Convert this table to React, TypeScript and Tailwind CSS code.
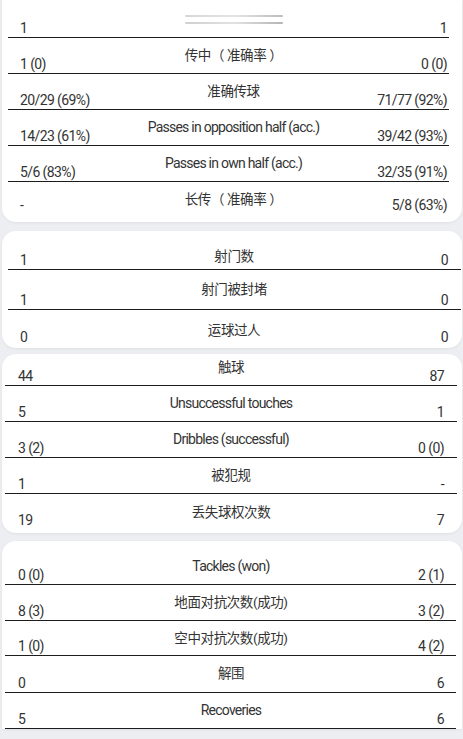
import React from "react";

type Stat = {
  left: string;
  label: React.ReactNode;
  right: string;
  h: string;
  top: string;
  line?: boolean;
};

type CardCfg = {
  cardCls: string;
  rowPx: string;
  lineCls: string;
  rows: Stat[];
};

const FONT = "font-['Roboto','Noto_Sans_CJK_SC',sans-serif]";

const BlurLabel = () => (
  <div className="flex flex-col gap-[5px] w-[98px] pt-[1px]">
    <div className="h-[2px] rounded bg-gradient-to-r from-[#d6d6d6] via-[#e4e4e4] to-[#bdbdbd] blur-[0.6px]" />
    <div className="h-[2px] rounded bg-gradient-to-r from-[#d0d0d0] via-[#e2e2e2] to-[#b5b5b5] blur-[0.6px]" />
  </div>
);

const cards: CardCfg[] = [
  {
    cardCls: "rounded-b-[14px] pb-[8px]",
    rowPx: "pl-[18px] pr-[15px]",
    lineCls: "ml-[6px] mr-[13px]",
    rows: [
      { left: "1", label: <BlurLabel />, right: "1", h: "h-[37px]", top: "mt-[14px]", line: true },
      { left: "1 (0)", label: "传中（ 准确率 ）", right: "0 (0)", h: "h-[35px]", top: "mt-[9px]", line: true },
      { left: "20/29 (69%)", label: "准确传球", right: "71/77 (92%)", h: "h-[35px]", top: "mt-[9px]", line: true },
      { left: "14/23 (61%)", label: "Passes in opposition half (acc.)", right: "39/42 (93%)", h: "h-[35px]", top: "mt-[9px]", line: true },
      { left: "5/6 (83%)", label: "Passes in own half (acc.)", right: "32/35 (91%)", h: "h-[35px]", top: "mt-[9px]", line: true },
      { left: "-", label: "长传（ 准确率 ）", right: "5/8 (63%)", h: "h-[32px]", top: "mt-[9px]" },
    ],
  },
  {
    cardCls: "rounded-[14px] mt-[9px] pb-[2px]",
    rowPx: "pl-[18px] pr-[14px]",
    lineCls: "ml-[6px] mr-[1px]",
    rows: [
      { left: "1", label: "射门数", right: "0", h: "h-[38px]", top: "mt-[17px]", line: true },
      { left: "1", label: "射门被封堵", right: "0", h: "h-[39px]", top: "mt-[11px]", line: true },
      { left: "0", label: "运球过人", right: "0", h: "h-[36px]", top: "mt-[12px]" },
    ],
  },
  {
    cardCls: "rounded-[14px] mt-[6px] pb-[4px]",
    rowPx: "pl-[16px] pr-[18px]",
    lineCls: "ml-[3px] mr-[5px]",
    rows: [
      { left: "44", label: "触球", right: "87", h: "h-[31px]", top: "mt-[5px]", line: true },
      { left: "5", label: "Unsuccessful touches", right: "1", h: "h-[35px]", top: "mt-[9px]", line: true },
      { left: "3 (2)", label: "Dribbles (successful)", right: "0 (0)", h: "h-[35px]", top: "mt-[9px]", line: true },
      { left: "1", label: "被犯规", right: "-", h: "h-[35px]", top: "mt-[9px]", line: true },
      { left: "19", label: "丢失球权次数", right: "7", h: "h-[35px]", top: "mt-[10px]" },
    ],
  },
  {
    cardCls: "rounded-t-[14px] mt-[8px]",
    rowPx: "pl-[16px] pr-[18px]",
    lineCls: "ml-[3px] mr-[6px]",
    rows: [
      { left: "0 (0)", label: "Tackles (won)", right: "2 (1)", h: "h-[43px]", top: "mt-[17px]", line: true },
      { left: "8 (3)", label: "地面对抗次数(成功)", right: "3 (2)", h: "h-[35px]", top: "mt-[9px]", line: true },
      { left: "1 (0)", label: "空中对抗次数(成功)", right: "4 (2)", h: "h-[34px]", top: "mt-[9px]", line: true },
      { left: "0", label: "解围", right: "6", h: "h-[36px]", top: "mt-[9px]", line: true },
      { left: "5", label: "Recoveries", right: "6", h: "h-[35px]", top: "mt-[9px]", line: true },
    ],
  },
];

const isLatin = (l: React.ReactNode) => typeof l === "string" && /^[\x00-\x7f]+$/.test(l);

const Row = ({ s, px, lineCls }: { s: Stat; px: string; lineCls: string }) => (
  <div>
    <div className={`grid grid-cols-[1fr_auto_1fr] ${s.h} ${px}`}>
      <span className="self-end mb-[2px] leading-[14px] text-[14px] tracking-[-0.6px] text-[#333]">{s.left}</span>
      <div
        className={`self-start ${s.top} leading-[16px] text-center whitespace-nowrap text-[#333] ${
          isLatin(s.label) ? "text-[14px] tracking-[-0.75px]" : "text-[13.5px] tracking-[-0.4px]"
        }`}
      >
        {s.label}
      </div>
      <span className="self-end justify-self-end mb-[2px] leading-[14px] text-[14px] tracking-[-0.6px] text-[#333]">
        {s.right}
      </span>
    </div>
    {s.line && <div className={`h-px bg-[#1c1c1c] ${lineCls}`} />}
  </div>
);

export default function App() {
  return (
    <div className={`h-[739px] overflow-hidden bg-[#eceef1] ${FONT}`}>
      {cards.map((c, i) => (
        <section
          key={i}
          className={`bg-white ml-[2px] mr-[1px] shadow-[0_1px_3px_rgba(0,0,0,0.06)] ${c.cardCls}`}
        >
          {c.rows.map((s, j) => (
            <Row key={j} s={s} px={c.rowPx} lineCls={c.lineCls} />
          ))}
        </section>
      ))}
    </div>
  );
}
